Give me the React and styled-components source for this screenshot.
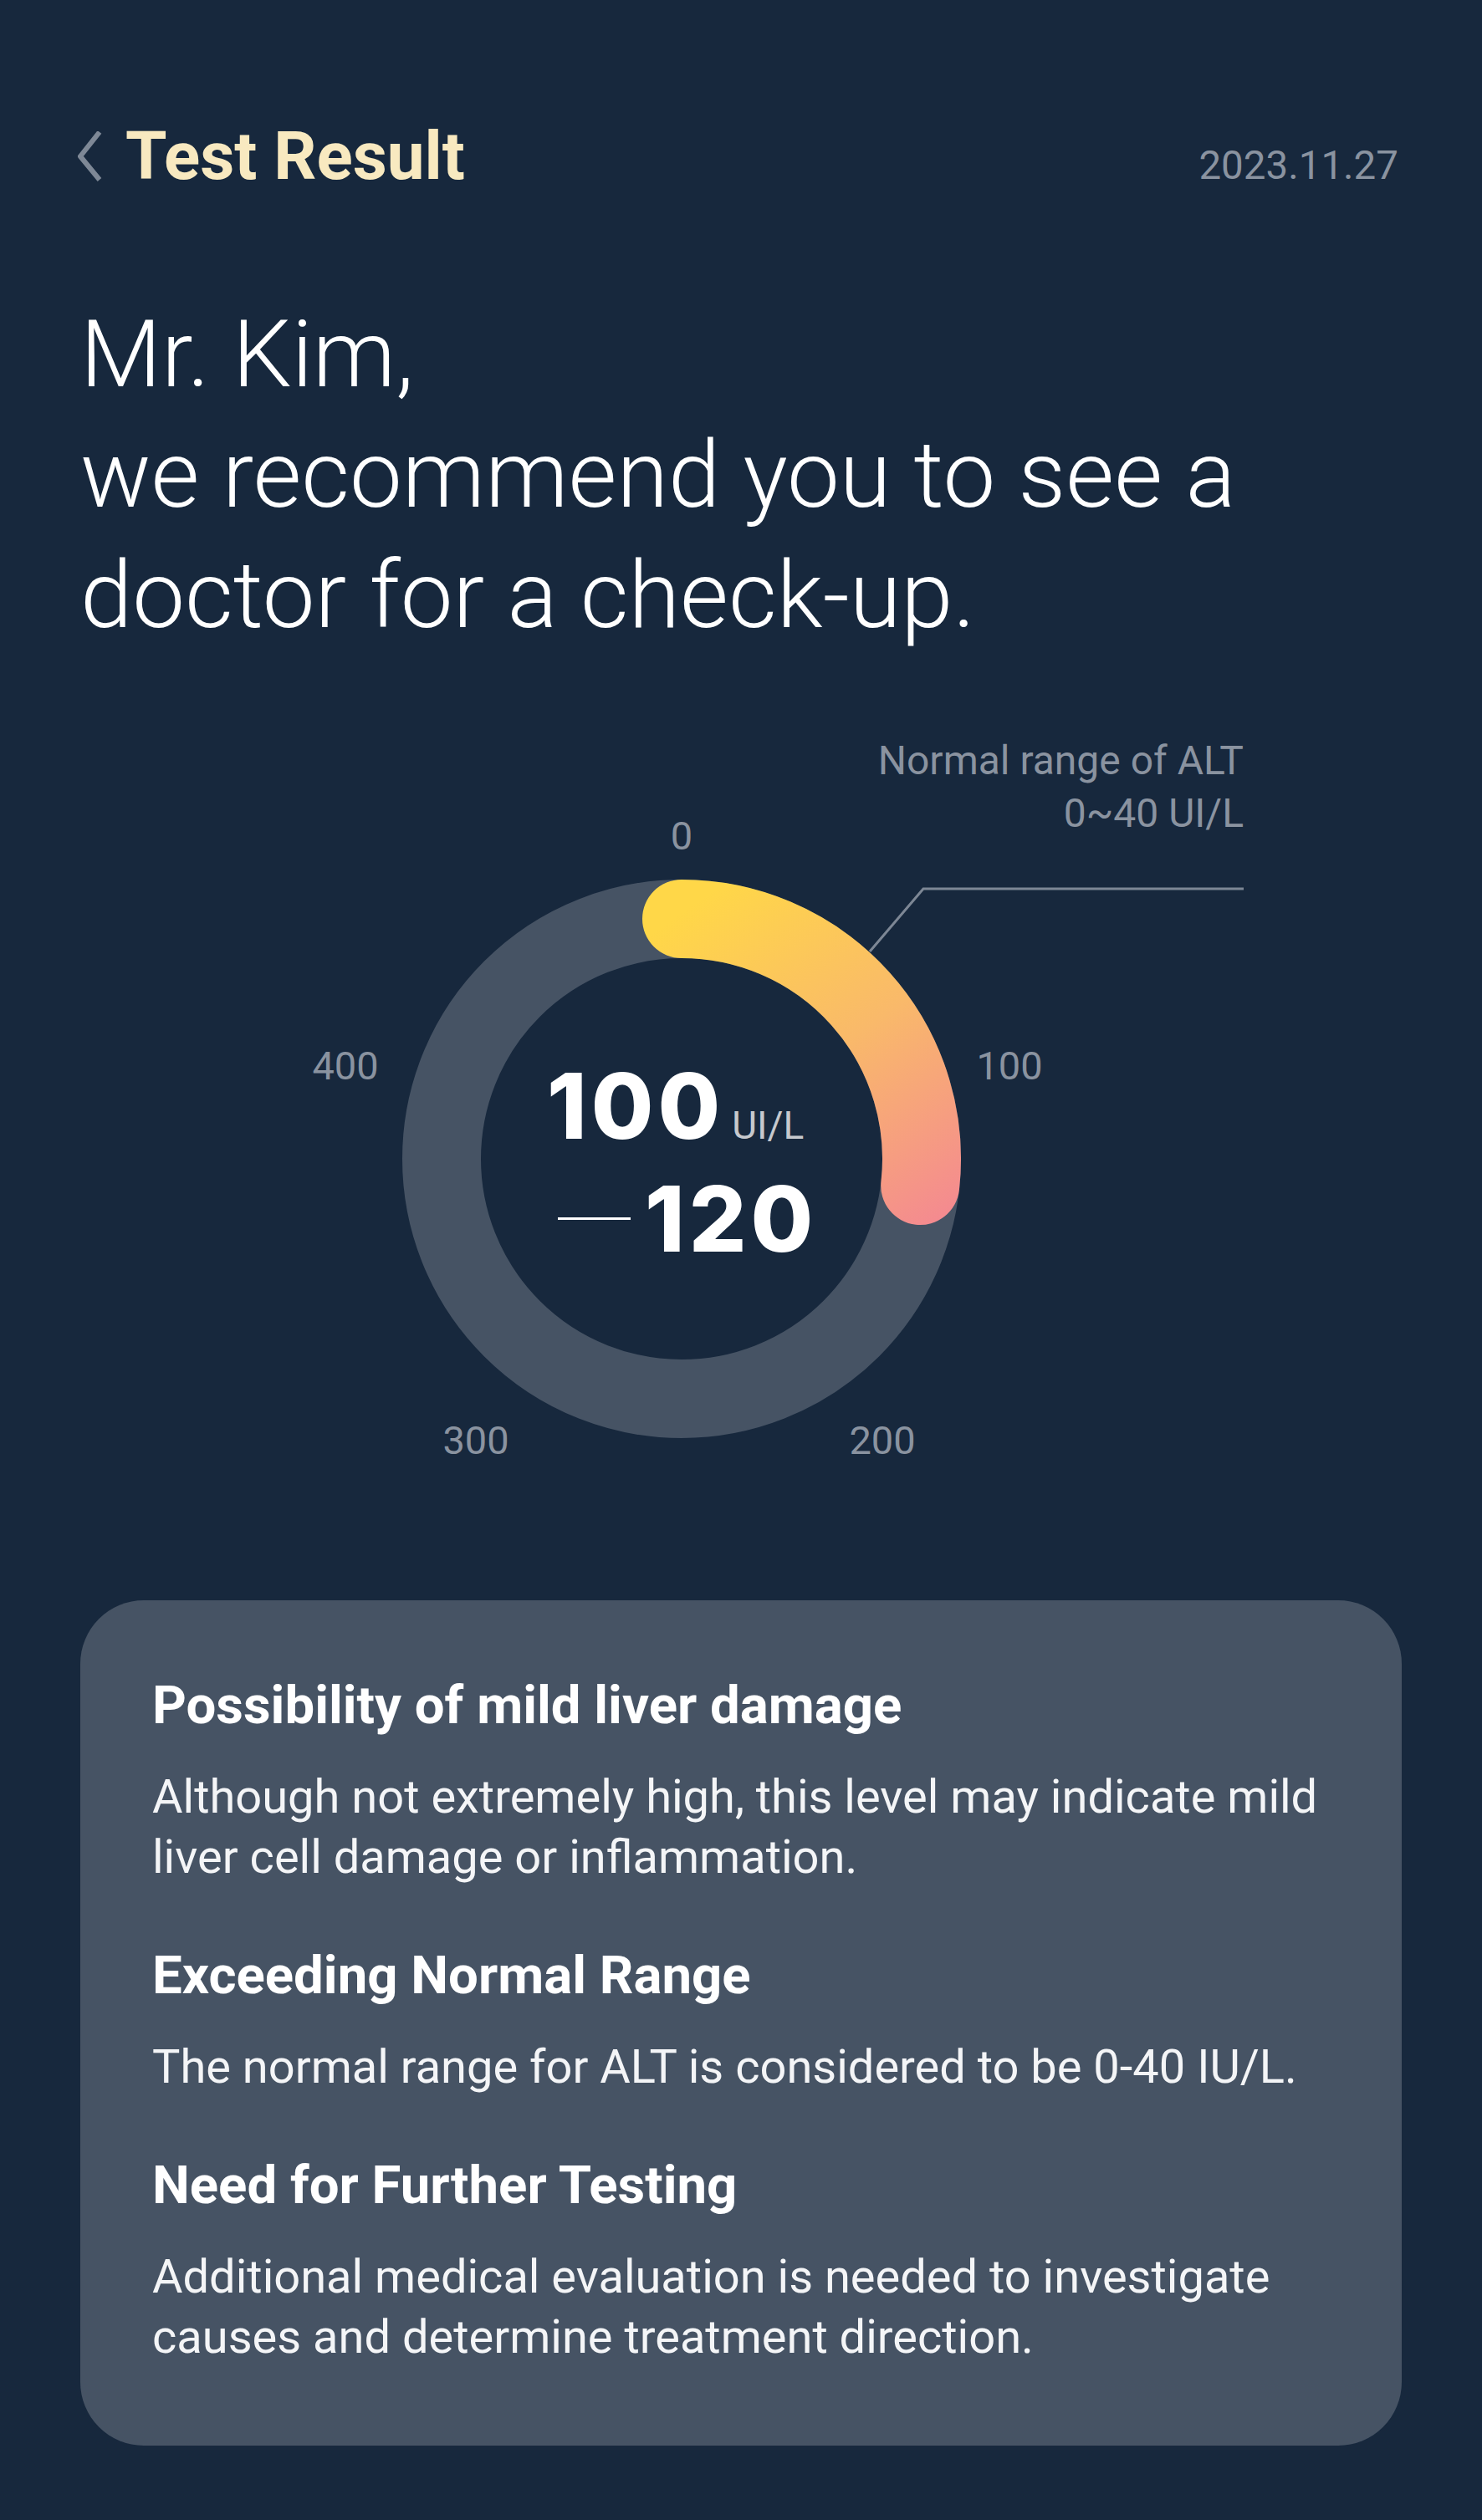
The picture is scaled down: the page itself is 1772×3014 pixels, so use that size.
import React from 'react'
import styled, { createGlobalStyle } from 'styled-components'

const GlobalStyle = createGlobalStyle`
	html, body {
		margin: 0;
		padding: 0;
		background: #17283d;
	}

	body {
		font-family: Roboto, "Liberation Sans", sans-serif;
		-webkit-font-smoothing: antialiased;
	}

	* {
		box-sizing: border-box;
	}
`

// gauge geometry, in the coordinates of the gauge section
const CX = 719
const CY = 602
const R = 287
const STROKE = 94
const END_ANGLE = 96.4

const polar = (deg, r = R) => {
	const a = (deg * Math.PI) / 180
	return [CX + r * Math.sin(a), CY - r * Math.cos(a)]
}

const ticks = [
	{ label: '0', x: 719, y: 215 },
	{ label: '100', x: 1111, y: 490 },
	{ label: '200', x: 959, y: 938 },
	{ label: '300', x: 473, y: 938 },
	{ label: '400', x: 317, y: 490 },
]

const findings = [
	{
		title: 'Possibility of mild liver damage',
		text: 'Although not extremely high, this level may indicate mild liver cell damage or inflammation.',
	},
	{
		title: 'Exceeding Normal Range',
		text: 'The normal range for ALT is considered to be 0-40 IU/L.',
	},
	{
		title: 'Need for Further Testing',
		text: 'Additional medical evaluation is needed to investigate causes and determine treatment direction.',
	},
]

const Gauge = () => {
	const [ex, ey] = polar(END_ANGLE)
	const arc = `M ${CX} ${CY - R} A ${R} ${R} 0 0 1 ${ex} ${ey}`

	return (
		<GaugeSection>
			<GaugeSvg viewBox='0 0 1580 1130' width='1580' height='1130'>
				<defs>
					<linearGradient id='altArc' gradientUnits='userSpaceOnUse' x1='730' y1='300' x2='1010' y2='690'>
						<stop offset='0' stopColor='#ffd748' />
						<stop offset='0.5' stopColor='#f9b96a' />
						<stop offset='1' stopColor='#f48a90' />
					</linearGradient>
				</defs>
				<circle cx={CX} cy={CY} r={R} fill='none' stroke='#465364' strokeWidth={STROKE} />
				<path d={arc} fill='none' stroke='url(#altArc)' strokeWidth={STROKE} strokeLinecap='round' />
				<polyline points='944,354 1008,279 1391,279' fill='none' stroke='#7d8795' strokeWidth='3' />
				{ticks.map((tick) => (
					<TickLabel key={tick.label} x={tick.x} y={tick.y + 17} textAnchor='middle'>
						{tick.label}
					</TickLabel>
				))}
			</GaugeSvg>

			<Legend>
				Normal range of ALT
				<br />
				0~40 UI/L
			</Legend>

			<CenterValue>
				<ValueRow>
					<BigNumber>100</BigNumber>
					<Unit>UI/L</Unit>
				</ValueRow>
				<ValueRow $indent={13}>
					<Dash />
					<BigNumber>120</BigNumber>
				</ValueRow>
			</CenterValue>
		</GaugeSection>
	)
}

const App = () => {
	return (
		<Page>
			<GlobalStyle />
			<Header>
				<TitleGroup>
					<BackIcon viewBox='0 0 30 60' width='30' height='60'>
						<polyline points='26,1 3,30 26,58' fill='none' stroke='#7e8896' strokeWidth='6' strokeLinejoin='round' />
					</BackIcon>
					<Title>Test Result</Title>
				</TitleGroup>
				<DateText>2023.11.27</DateText>
			</Header>

			<Headline>
				Mr. Kim,
				<br />
				we recommend you to see a
				<br />
				doctor for a check-up.
			</Headline>

			<Gauge />

			<Card>
				{findings.map((item) => (
					<Finding key={item.title}>
						<FindingTitle>{item.title}</FindingTitle>
						<FindingText>{item.text}</FindingText>
					</Finding>
				))}
			</Card>
		</Page>
	)
}

const Page = styled.div`
	width: 1772px;
	min-height: 3014px;
	padding: 140px 96px 87px;
	background: #17283d;
	color: #ffffff;
`

const Header = styled.header`
	display: flex;
	align-items: center;
	justify-content: space-between;
`

const TitleGroup = styled.div`
	display: flex;
	align-items: center;
	gap: 27px;
	margin-left: -3px;
`

const BackIcon = styled.svg`
	display: block;
	flex: none;
	margin-top: -2px;
`

const Title = styled.h1`
	margin: 0;
	font-size: 80px;
	line-height: 95px;
	font-weight: 700;
	color: #f8e9c0;
`

const DateText = styled.span`
	margin-top: 21px;
	margin-right: 4px;
	font-size: 47.5px;
	line-height: 54px;
	color: #8a93a0;
`

const Headline = styled.h2`
	margin: 117px 0 0;
	font-size: 112px;
	line-height: 144px;
	font-weight: 300;
	color: #ffffff;
`

const GaugeSection = styled.section`
	position: relative;
	height: 1130px;
`

const GaugeSvg = styled.svg`
	display: block;
`

const TickLabel = styled.text`
	font-family: Roboto, "Liberation Sans", sans-serif;
	font-size: 47px;
	fill: #8a93a0;
`

const Legend = styled.div`
	position: absolute;
	top: 94px;
	right: 189px;
	text-align: right;
	font-size: 48px;
	line-height: 63px;
	color: #8a93a0;
`

const CenterValue = styled.div`
	position: absolute;
	top: 485px;
	left: 558px;
	display: flex;
	flex-direction: column;
	align-items: flex-start;
	gap: 28px;
`

const ValueRow = styled.div`
	display: flex;
	align-items: baseline;
	white-space: nowrap;
	margin-left: ${(p) => p.$indent || 0}px;
`

const BigNumber = styled.span`
	font-family: Inter, Roboto, sans-serif;
	font-size: 108px;
	line-height: 107px;
	font-weight: 800;
	color: #ffffff;
	letter-spacing: 5px;
`

const Unit = styled.span`
	margin-left: 9px;
	font-size: 46px;
	color: #c6c9ce;
`

const Dash = styled.span`
	align-self: center;
	width: 87px;
	height: 3px;
	margin-right: 17px;
	background: #ffffff;
`

const Card = styled.div`
	display: flex;
	flex-direction: column;
	gap: 66px;
	padding: 86px 86px 94px;
	border-radius: 76px;
	background: #465364;
`

const Finding = styled.div`
	display: flex;
	flex-direction: column;
	gap: 33px;
`

const FindingTitle = styled.h3`
	margin: 0;
	font-size: 63.5px;
	line-height: 80px;
	font-weight: 700;
	color: #ffffff;
`

const FindingText = styled.p`
	margin: 0;
	font-size: 56px;
	line-height: 72px;
	font-weight: 400;
	color: #f4f5f7;
`

export default App
